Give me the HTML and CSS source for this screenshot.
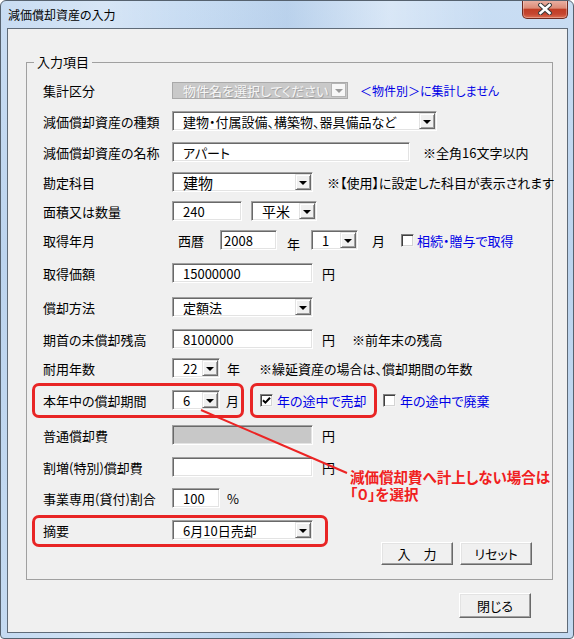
FILE: index.html
```html
<!DOCTYPE html>
<html lang="ja">
<head>
<meta charset="utf-8">
<title>減価償却資産の入力</title>
<link rel="stylesheet" href="styles.css">
</head>
<body>
<div class="window">
  <div class="titlebar">
    <span class="title">減価償却資産の入力</span>
    <span class="close">
      <svg width="14" height="12" viewBox="0 0 14 12">
        <path d="M2.5 2 L11.5 10 M11.5 2 L2.5 10" stroke="#3a3a3a" stroke-width="4.6" stroke-linecap="square"/>
        <path d="M2.5 2 L11.5 10 M11.5 2 L2.5 10" stroke="#ffffff" stroke-width="2.6" stroke-linecap="square"/>
      </svg>
    </span>
  </div>
  <div class="client">
    <div class="group">
      <span class="legend">入力項目</span>

      <div class="row">
        <span class="label">集計区分</span>
        <div class="combo disabled w176"><span class="val">物件名を選択してください</span><span class="drop"><i class="tri"></i></span></div>
        <span class="link small ml12">＜物件別＞に集計しません</span>
      </div>

      <div class="row g11">
        <span class="label">減価償却資産の種類</span>
        <div class="combo w265"><span class="val">建物・付属設備、構築物、器具備品など</span><span class="drop"><i class="tri"></i></span></div>
      </div>

      <div class="row g11">
        <span class="label">減価償却資産の名称</span>
        <div class="field w238">アパート</div>
        <span class="ml13">※全角16文字以内</span>
      </div>

      <div class="row g10">
        <span class="label">勘定科目</span>
        <div class="combo w141"><span class="val big">建物</span><span class="drop"><i class="tri"></i></span></div>
        <span class="ml14">※【使用】に設定した科目が表示されます</span>
      </div>

      <div class="row g9">
        <span class="label">面積又は数量</span>
        <div class="field w70">240</div>
        <div class="combo w66 ml9"><span class="val mid">平米</span><span class="drop"><i class="tri"></i></span></div>
      </div>

      <div class="row g9">
        <span class="label">取得年月</span>
        <span class="ml6">西暦</span>
        <div class="field w57 tight ml16">2008</div>
        <span class="ml10 low">年</span>
        <div class="combo w47 ml11"><span class="val">1</span><span class="drop"><i class="tri"></i></span></div>
        <span class="ml14">月</span>
        <span class="check ml16"></span>
        <span class="link ml3">相続・贈与で取得</span>
      </div>

      <div class="row g13">
        <span class="label">取得価額</span>
        <div class="field w141">15000000</div>
        <span class="ml9">円</span>
      </div>

      <div class="row g14">
        <span class="label">償却方法</span>
        <div class="combo w141"><span class="val">定額法</span><span class="drop"><i class="tri"></i></span></div>
      </div>

      <div class="row g12">
        <span class="label">期首の未償却残高</span>
        <div class="field w141">8100000</div>
        <span class="ml9">円</span>
        <span class="ml17">※前年末の残高</span>
      </div>

      <div class="row g9">
        <span class="label">耐用年数</span>
        <div class="combo w48"><span class="val">22</span><span class="drop"><i class="tri"></i></span></div>
        <span class="ml7">年</span>
        <span class="ml19">※繰延資産の場合は、償却期間の年数</span>
      </div>

      <div class="row g12">
        <span class="label">本年中の償却期間</span>
        <div class="combo w48"><span class="val">6</span><span class="drop"><i class="tri"></i></span></div>
        <span class="ml6">月</span>
        <span class="chk-item first ml21">
          <span class="check checked"><svg width="9" height="9" viewBox="0 0 9 9"><polyline points="1,4.2 3.4,6.6 8,1.8" fill="none" stroke="#000" stroke-width="2"/></svg></span>
          <span class="link ml4">年の途中で売却</span>
        </span>
        <span class="chk-item">
          <span class="check"></span>
          <span class="link ml4">年の途中で廃棄</span>
        </span>
      </div>

      <div class="row g15">
        <span class="label">普通償却費</span>
        <div class="field gray w141"></div>
        <span class="ml9">円</span>
      </div>

      <div class="row g12">
        <span class="label">割増(特別)償却費</span>
        <div class="field w141"></div>
        <span class="ml9">円</span>
      </div>

      <div class="row g11">
        <span class="label">事業専用(貸付)割合</span>
        <div class="field w48">100</div>
        <span class="ml7">%</span>
      </div>

      <div class="row g12">
        <span class="label">摘要</span>
        <div class="combo w141"><span class="val">6月10日売却</span><span class="drop"><i class="tri"></i></span></div>
      </div>

      <div class="btn-row">
        <button class="btn">入　力</button>
        <button class="btn">リセット</button>
      </div>
    </div>

    <div class="footer">
      <button class="btn btn-close">閉じる</button>
    </div>

    <div class="callout callout-period"></div>
    <div class="callout callout-sold"></div>
    <div class="callout callout-memo"></div>
    <svg class="leader" width="561" height="603" viewBox="0 0 561 603">
      <line x1="193" y1="381" x2="339" y2="444" stroke="#ec2424" stroke-width="2"/>
    </svg>
    <div class="annot">
      <div class="annot-line">減価償却費へ計上しない場合は</div>
      <div class="annot-line">「０」を選択</div>
    </div>
  </div>
</div>
</body>
</html>
```

FILE: styles.css
```css
* { box-sizing: border-box; }

body {
  margin: 0;
  background: #ffffff;
  font-family: "Noto Sans CJK JP", "Noto Sans", sans-serif;
  font-size: 13px;
  color: #000;
  font-feature-settings: "palt";
}

.window {
  width: 574px;
  height: 639px;
  border: 1px solid #56626f;
  border-radius: 6px 6px 4px 4px;
  background:
    linear-gradient(90deg, rgba(255,255,255,0) 0%, rgba(255,255,255,.25) 18%, rgba(255,255,255,0) 32%, rgba(120,160,205,.18) 50%, rgba(255,255,255,.3) 68%, rgba(255,255,255,0) 85%),
    linear-gradient(180deg, #c9ddf3 0%, #bcd4ee 40%, #c4daf1 100%);
  display: flex;
  flex-direction: column;
  overflow: hidden;
}

.titlebar {
  height: 27px;
  flex: none;
  display: flex;
  justify-content: space-between;
  align-items: flex-start;
  padding: 0 5px 0 7px;
}

.title {
  font-size: 12px;
  line-height: 27px;
  color: #000;
}

.close {
  width: 46px;
  height: 19px;
  margin-top: -1px;
  border: 1px solid #6d2a20;
  border-top: none;
  border-radius: 0 0 5px 5px;
  background: linear-gradient(180deg, #ebb4a7 0%, #dc8b77 45%, #c13d25 52%, #c54630 78%, #dd6f52 100%);
  box-shadow: inset 0 0 0 1px rgba(255,255,255,.3);
  display: flex;
  align-items: center;
  justify-content: center;
}

.client {
  flex: 1;
  margin: 0 5px 5px 6px;
  border: 1px solid #5f6b78;
  background: #f0f0f0;
  position: relative;
  display: flex;
  flex-direction: column;
}

.group {
  position: relative;
  margin: 33px 0 0 18px;
  width: 527px;
  border: 1px solid #a0a0a0;
  padding: 17px 0 14px 0;
}

.legend {
  position: absolute;
  top: -9px;
  left: 7px;
  padding: 0 3px;
  line-height: 16px;
  background: #f0f0f0;
}

.row {
  display: flex;
  align-items: center;
  height: 20px;
  padding-left: 16px;
  white-space: nowrap;
}

.g9 { margin-top: 9px; }
.g10 { margin-top: 10px; }
.g11 { margin-top: 11px; }
.g12 { margin-top: 12px; }
.g13 { margin-top: 13px; }
.g14 { margin-top: 14px; }
.g15 { margin-top: 15px; }

.label {
  width: 129px;
  flex: none;
}

.ml3 { margin-left: 3px; }
.ml4 { margin-left: 4px; }
.ml6 { margin-left: 6px; }
.ml7 { margin-left: 7px; }
.ml9 { margin-left: 9px; }
.ml10 { margin-left: 10px; }
.ml11 { margin-left: 11px; }
.ml12 { margin-left: 12px; }
.ml13 { margin-left: 13px; }
.ml14 { margin-left: 14px; }
.ml16 { margin-left: 16px; }
.ml17 { margin-left: 17px; }
.ml19 { margin-left: 19px; }
.ml21 { margin-left: 21px; }

.w47 { width: 47px; }
.w48 { width: 48px; }
.w57 { width: 57px; }
.w66 { width: 66px; }
.w70 { width: 70px; }
.w141 { width: 141px; }
.w176 { width: 176px; }
.w238 { width: 238px; }
.w265 { width: 265px; }

.low { position: relative; top: 3px; }

.field,
.combo {
  flex: none;
  height: 20px;
  background: #fff;
  border: 1px solid;
  border-color: #a0a0a0 #ffffff #ffffff #a0a0a0;
  box-shadow: inset 1px 1px 0 #696969, inset -1px -1px 0 #e3e3e3;
  display: flex;
  align-items: center;
  padding-left: 10px;
  overflow: hidden;
  white-space: nowrap;
}

.field.tight { padding-left: 3px; }

.field.gray { background: #c8c8c8; }

.combo { padding-right: 1px; }

.val {
  flex: 1;
  overflow: hidden;
}

.val.big { font-size: 15px; }
.val.mid { font-size: 14px; }

.drop {
  flex: none;
  width: 16px;
  height: 16px;
  background: #f0f0f0;
  border: 1px solid;
  border-color: #e3e3e3 #696969 #696969 #e3e3e3;
  box-shadow: inset 1px 1px 0 #ffffff, inset -1px -1px 0 #a0a0a0;
  display: flex;
  align-items: center;
  justify-content: center;
}

.tri {
  width: 0;
  height: 0;
  border-left: 4px solid transparent;
  border-right: 4px solid transparent;
  border-top: 4px solid #000;
  margin-top: 1px;
}

.combo.disabled {
  height: 17px;
  background: #c9c9c9;
  border: 1px solid #a9a9a9;
  box-shadow: none;
  padding-right: 1px;
}

.combo.disabled .val {
  color: #f6f6f6;
  text-shadow: 1px 1px 0 #a4a4a4;
}

.combo.disabled .drop {
  height: 14px;
  width: 15px;
  background: #f7f7f7;
  border: 1px solid #b4b4b4;
  box-shadow: none;
}

.combo.disabled .tri { border-top-color: #9a9a9a; }

.link { color: #0000e6; }
.small { font-size: 12px; }

.check {
  flex: none;
  width: 13px;
  height: 13px;
  background: #fff;
  border: 1px solid;
  border-color: #808080 #f4f4f4 #f4f4f4 #808080;
  box-shadow: inset 1px 1px 0 #404040, inset -1px -1px 0 #d4d4d4;
  display: inline-flex;
  align-items: center;
  justify-content: center;
}

.chk-item {
  display: flex;
  align-items: center;
}

.chk-item.first { width: 123px; }

.btn-row {
  display: flex;
  justify-content: flex-end;
  gap: 7px;
  margin-top: 2px;
  padding-right: 20px;
}

.btn {
  width: 72px;
  height: 23px;
  padding: 0;
  font-family: inherit;
  font-size: 13px;
  font-feature-settings: "palt";
  color: #000;
  background: #f0f0f0;
  border: 1px solid;
  border-color: #ffffff #696969 #696969 #ffffff;
  box-shadow: inset -1px -1px 0 #a0a0a0, inset 1px 1px 0 #e3e3e3;
}

.footer {
  display: flex;
  justify-content: flex-end;
  margin-top: 13px;
  padding-right: 36px;
}

.btn-close { height: 25px; }

.callout {
  position: absolute;
  border: 3px solid #e82525;
  border-radius: 7px;
}

.callout-period { left: 24px; top: 354px; width: 212px; height: 35px; }
.callout-sold { left: 242px; top: 354px; width: 127px; height: 35px; }
.callout-memo { left: 24px; top: 486px; width: 296px; height: 32px; }

.leader {
  position: absolute;
  left: 0;
  top: 0;
  pointer-events: none;
}

.annot {
  position: absolute;
  left: 342px;
  top: 439px;
  color: #f02020;
  font-weight: bold;
  font-size: 14.5px;
  white-space: nowrap;
}

.annot-line {
  height: 17px;
  line-height: 17px;
}
```
